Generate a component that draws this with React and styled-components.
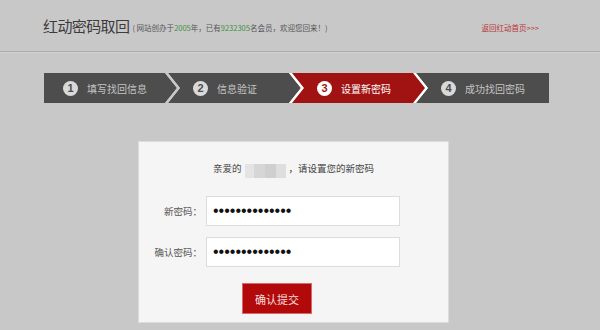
import React from 'react';
import styled, { createGlobalStyle } from 'styled-components';

const GlobalStyle = createGlobalStyle`
  html, body {
    margin: 0;
    padding: 0;
    background: #c9c8c9;
  }
  body {
    font-family: "Noto Sans CJK SC", "Noto Sans", sans-serif;
    color: #333;
  }
`;

const Page = styled.div`
  width: 600px;
  height: 330px;
  overflow: hidden;
`;

const Header = styled.header`
  height: 51px;
  border-bottom: 1px solid #acabac;
  box-shadow: 0 1px 0 #d4d3d4;
  display: flex;
  align-items: center;
  padding: 0 61px 0 43px;
`;

const Title = styled.h1`
  margin: 0;
  font-size: 15px;
  font-weight: normal;
  color: #3b3b3b;
  letter-spacing: -0.6px;
`;

const Intro = styled.span`
  margin: 3px 0 0 3px;
  font-size: 7.5px;
  color: #555;
`;

const Num = styled.em`
  font-style: normal;
  color: #3f8f3f;
`;

const BackLink = styled.a`
  margin: 3px 0 0 auto;
  font-size: 7.5px;
  color: #b53535;
  text-decoration: none;
`;

const Steps = styled.ol`
  list-style: none;
  display: flex;
  margin: 21px 0 0 44px;
  padding: 0;
  height: 30px;
`;

const D = 12;
const G = 3;

const chevron = (first, last) => {
  const notch = first ? '' : `, ${D}px 50%`;
  const right = last
    ? '100% 0, 100% 100%'
    : `calc(100% - ${D}px) 0, 100% 50%, calc(100% - ${D}px) 100%`;
  return `polygon(0 0, ${right}, 0 100%${notch})`;
};

const StepFrame = styled.li`
  flex: none;
  box-sizing: border-box;
  height: 30px;
  width: ${(p) => (p.$active ? 133 + 2 * G : 133)}px;
  margin-left: ${(p) => (p.$first ? 0 : p.$active ? -D : -(D - G))}px;
  margin-right: ${(p) => (p.$active ? -G : 0)}px;
  padding: 0 ${(p) => (p.$active ? G : 0)}px;
  background: ${(p) => (p.$active ? '#ffffff' : 'transparent')};
  clip-path: ${(p) => chevron(p.$first, p.$last)};
`;

const StepBody = styled.div`
  height: 100%;
  display: flex;
  align-items: center;
  gap: 9px;
  padding-left: ${(p) => (p.$first ? 19 : 25)}px;
  background: ${(p) => (p.$active ? '#a11313' : '#4d4d4d')};
  color: ${(p) => (p.$active ? '#ffffff' : '#c4c4c4')};
  font-size: 10px;
  clip-path: ${(p) => chevron(p.$first, p.$last)};
`;

const StepNo = styled.span`
  width: 15px;
  height: 15px;
  border-radius: 50%;
  display: flex;
  align-items: center;
  justify-content: center;
  background: ${(p) => (p.$active ? '#ffffff' : '#d9d9d9')};
  color: ${(p) => (p.$active ? '#a11313' : '#4d4d4d')};
  font: bold 11px "Liberation Sans", sans-serif;
`;

const Card = styled.section`
  box-sizing: border-box;
  width: 311px;
  height: 182px;
  margin: 38px 0 0 138px;
  background: #f5f5f5;
  border: 1px solid #dcdcdc;
  padding-top: 19px;
`;

const Greeting = styled.p`
  margin: 0 0 18px;
  text-align: center;
  font-size: 9.5px;
  line-height: 14px;
  color: #444;
`;

const Masked = styled.span`
  display: inline-block;
  width: 41px;
  height: 14px;
  margin: 0 3px;
  vertical-align: -3px;
  color: transparent;
  background: linear-gradient(90deg, #e4e4e4 0 22%, #d6d6d6 22% 48%, #cfcfcf 48% 76%, #dedede 76%);
  filter: blur(0.6px);
`;

const Form = styled.form`
  display: grid;
  grid-template-columns: 63px 194px;
  column-gap: 4px;
  row-gap: 11px;
  align-items: center;
`;

const Label = styled.label`
  text-align: right;
  font-size: 9.5px;
  color: #555;
`;

const Input = styled.input`
  box-sizing: border-box;
  width: 194px;
  height: 30px;
  margin: 0;
  padding: 0 6px;
  border: 1px solid #dcdcdc;
  background: #fff;
  color: #111;
  font: 16px "Liberation Sans", sans-serif;
  outline: none;
`;

const Submit = styled.button`
  grid-column: 2;
  justify-self: start;
  margin: 5px 0 0 36px;
  width: 70px;
  height: 31px;
  border: 1px solid #d46a6a;
  background: #b20a0a;
  color: #f6dede;
  font-family: "Noto Sans CJK SC", sans-serif;
  font-size: 11px;
  cursor: pointer;
`;

const steps = ['填写找回信息', '信息验证', '设置新密码', '成功找回密码'];
const current = 2;

export default function App() {
  return (
    <Page>
      <GlobalStyle />
      <Header>
        <Title>红动密码取回</Title>
        <Intro>
          ( 网站创办于<Num>2005</Num>年，已有<Num>9232305</Num>名会员，欢迎您回来！)
        </Intro>
        <BackLink href="#">返回红动首页&gt;&gt;&gt;</BackLink>
      </Header>

      <Steps>
        {steps.map((name, i) => {
          const first = i === 0;
          const last = i === steps.length - 1;
          const active = i === current;
          return (
            <StepFrame key={name} $first={first} $last={last} $active={active}>
              <StepBody $first={first} $last={last} $active={active}>
                <StepNo $active={active}>{i + 1}</StepNo>
                {name}
              </StepBody>
            </StepFrame>
          );
        })}
      </Steps>

      <Card>
        <Greeting>
          亲爱的<Masked>用户</Masked>，请设置您的新密码
        </Greeting>
        <Form onSubmit={(e) => e.preventDefault()}>
          <Label htmlFor="pwd">新密码：</Label>
          <Input id="pwd" type="password" defaultValue="abcdefghijklmn" readOnly />
          <Label htmlFor="pwd2">确认密码：</Label>
          <Input id="pwd2" type="password" defaultValue="abcdefghijklmn" readOnly />
          <Submit type="submit">确认提交</Submit>
        </Form>
      </Card>
    </Page>
  );
}
